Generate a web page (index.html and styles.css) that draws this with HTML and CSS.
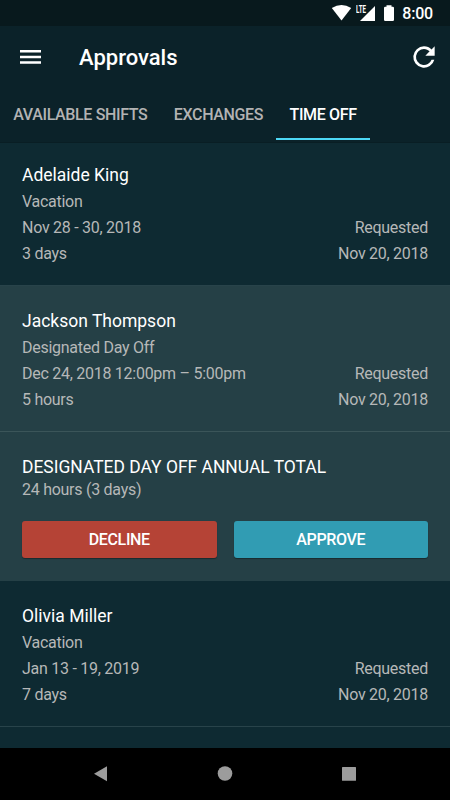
FILE: index.html
```html
<!DOCTYPE html>
<html lang="en">
<head>
<meta charset="utf-8">
<title>Approvals</title>
<link rel="stylesheet" href="styles.css">
</head>
<body>
<div class="screen">
  <div class="status">
    <svg class="status-icons" width="98" height="26" viewBox="0 0 98 26" fill="#fff">
      <path d="M1.800 8.100Q11.500 2 21.200 8.100L11.500 20.500Z"/>
      <path d="M45 6v15H30Z"/>
      <path d="M54 8q0-1.200 1.200-1.200H56.500V5.200h5v1.600h1.300Q64 6.800 64 8v11.800q0 1.200-1.200 1.200h-7.600q-1.200 0-1.200-1.200Z"/>
    </svg>
    <span class="lte">LTE</span>
    <span class="clock">8:00</span>
  </div>
  <header class="header">
    <div class="appbar">
      <svg class="menu" width="22" height="16" viewBox="0 0 22 16" fill="#fff"><path d="M0 .9h21v2.500H0zM0 6.700h21v2.500H0zM0 12.300h21v2.500H0z"/></svg>
      <h1 class="title">Approvals</h1>
      <svg class="refresh" width="32" height="32" viewBox="0 0 24 24" fill="#fff"><path d="M17.650 6.350A7.958 7.958 0 0 0 12 4a8 8 0 1 0 7.730 10h-2.080A6 6 0 1 1 12 6c1.660 0 3.140.690 4.220 1.780L13 11h7V4z"/></svg>
    </div>
    <nav class="tabs">
      <span class="tab">AVAILABLE SHIFTS</span>
      <span class="tab">EXCHANGES</span>
      <span class="tab tab-active">TIME OFF</span>
    </nav>
  </header>
  <main class="list">
    <section class="request request-first">
      <h2 class="name">Adelaide King</h2>
      <p class="line">Vacation</p>
      <p class="line"><span>Nov 28 - 30, 2018</span><span>Requested</span></p>
      <p class="line"><span>3 days</span><span>Nov 20, 2018</span></p>
    </section>
    <section class="request selected">
      <h2 class="name">Jackson Thompson</h2>
      <p class="line">Designated Day Off</p>
      <p class="line"><span>Dec 24, 2018 12:00pm – 5:00pm</span><span>Requested</span></p>
      <p class="line"><span>5 hours</span><span>Nov 20, 2018</span></p>
    </section>
    <section class="detail selected">
      <h3 class="total">DESIGNATED DAY OFF ANNUAL TOTAL</h3>
      <p class="line hours">24 hours (3 days)</p>
      <div class="actions">
        <button class="btn decline">DECLINE</button>
        <button class="btn approve">APPROVE</button>
      </div>
    </section>
    <section class="request">
      <h2 class="name">Olivia Miller</h2>
      <p class="line">Vacation</p>
      <p class="line"><span>Jan 13 - 19, 2019</span><span>Requested</span></p>
      <p class="line"><span>7 days</span><span>Nov 20, 2018</span></p>
    </section>
  </main>
  <footer class="navbar">
    <svg width="450" height="52" viewBox="0 0 450 52" fill="#9c9c9c"><path d="M94 25.700l13-7.500v15z"/><circle cx="225" cy="25.500" r="7.300"/><rect x="342" y="19" width="14" height="13.700" rx=".5"/></svg>
  </footer>
</div>
</body>
</html>
```

FILE: styles.css
```css
* { box-sizing: border-box; margin: 0; padding: 0; }
body { background: #0e2a32; font-family: Roboto, sans-serif; }
.screen {
  width: 450px; height: 800px; overflow: hidden;
  display: flex; flex-direction: column; background: #0e2a32;
}
.status {
  position: relative; height: 26px; flex: none; background: #08191d;
  display: flex; justify-content: flex-end; padding-right: 17px;
}
.status-icons { position: absolute; left: 330px; top: 0; }
.lte {
  position: absolute; left: 355.500px; top: 4px; color: #fff;
  font: 700 11px/11px Roboto, sans-serif;
  transform: scaleX(.56); transform-origin: left;
}
.clock { color: #fff; font-size: 16px; font-weight: 500; line-height: 28px; letter-spacing: -.2px; }
.header {
  height: 117px; flex: none; background: #0b2229;
  border-bottom: 1px solid #091e24;
}
.appbar { height: 64px; display: flex; align-items: center; padding: 0 10px 0 20px; }
.menu { flex: none; margin-top: -2px; }
.title { flex: 1; margin: -2px 0 0 37px; color: #fff; font-size: 22px; font-weight: 500; }
.refresh { margin-top: -3px; }
.tabs { height: 50px; display: flex; }
.tab {
  padding: 0 13.200px; color: #b3b3b3; font-size: 16px; font-weight: 500;
  letter-spacing: -.35px;
  line-height: 49px; height: 50px; white-space: nowrap;
}
.tab-active { color: #fff; border-bottom: 2px solid #4dd8f5; }
.list { flex: 1; overflow: hidden; }
.request { height: 146px; padding: 22px 22px 0; border-bottom: 1px solid #28434a; }
.request-first { height: 143px; padding-top: 19px; }
.selected { background: #254046; }
.request.selected { border-bottom-color: #3b5559; }
.name { margin-bottom: 1px; color: #fff; font-size: 17.500px; font-weight: 400; line-height: 26px; }
.line {
  display: flex; justify-content: space-between;
  color: #b6b8b8; font-size: 16px; line-height: 26px; letter-spacing: -.27px;
}
.detail { height: 149px; padding: 23px 22px 0; }
.total { color: #fff; font-size: 17.450px; font-weight: 400; line-height: 24px; }
.hours { line-height: 22px; }
.actions { display: grid; grid-template-columns: 1fr 1fr; gap: 17px; margin-top: 20px; }
.btn {
  height: 37px; border: 0; border-radius: 3px; color: #fff;
  font: 500 16px/37px Roboto, sans-serif; letter-spacing: -.35px;
  box-shadow: 0 1px 1px rgba(0, 0, 0, .35);
}
.decline { background: #b54336; }
.approve { background: #319cb3; }
.navbar { height: 52px; flex: none; background: #000; }
.navbar svg { display: block; }
```
